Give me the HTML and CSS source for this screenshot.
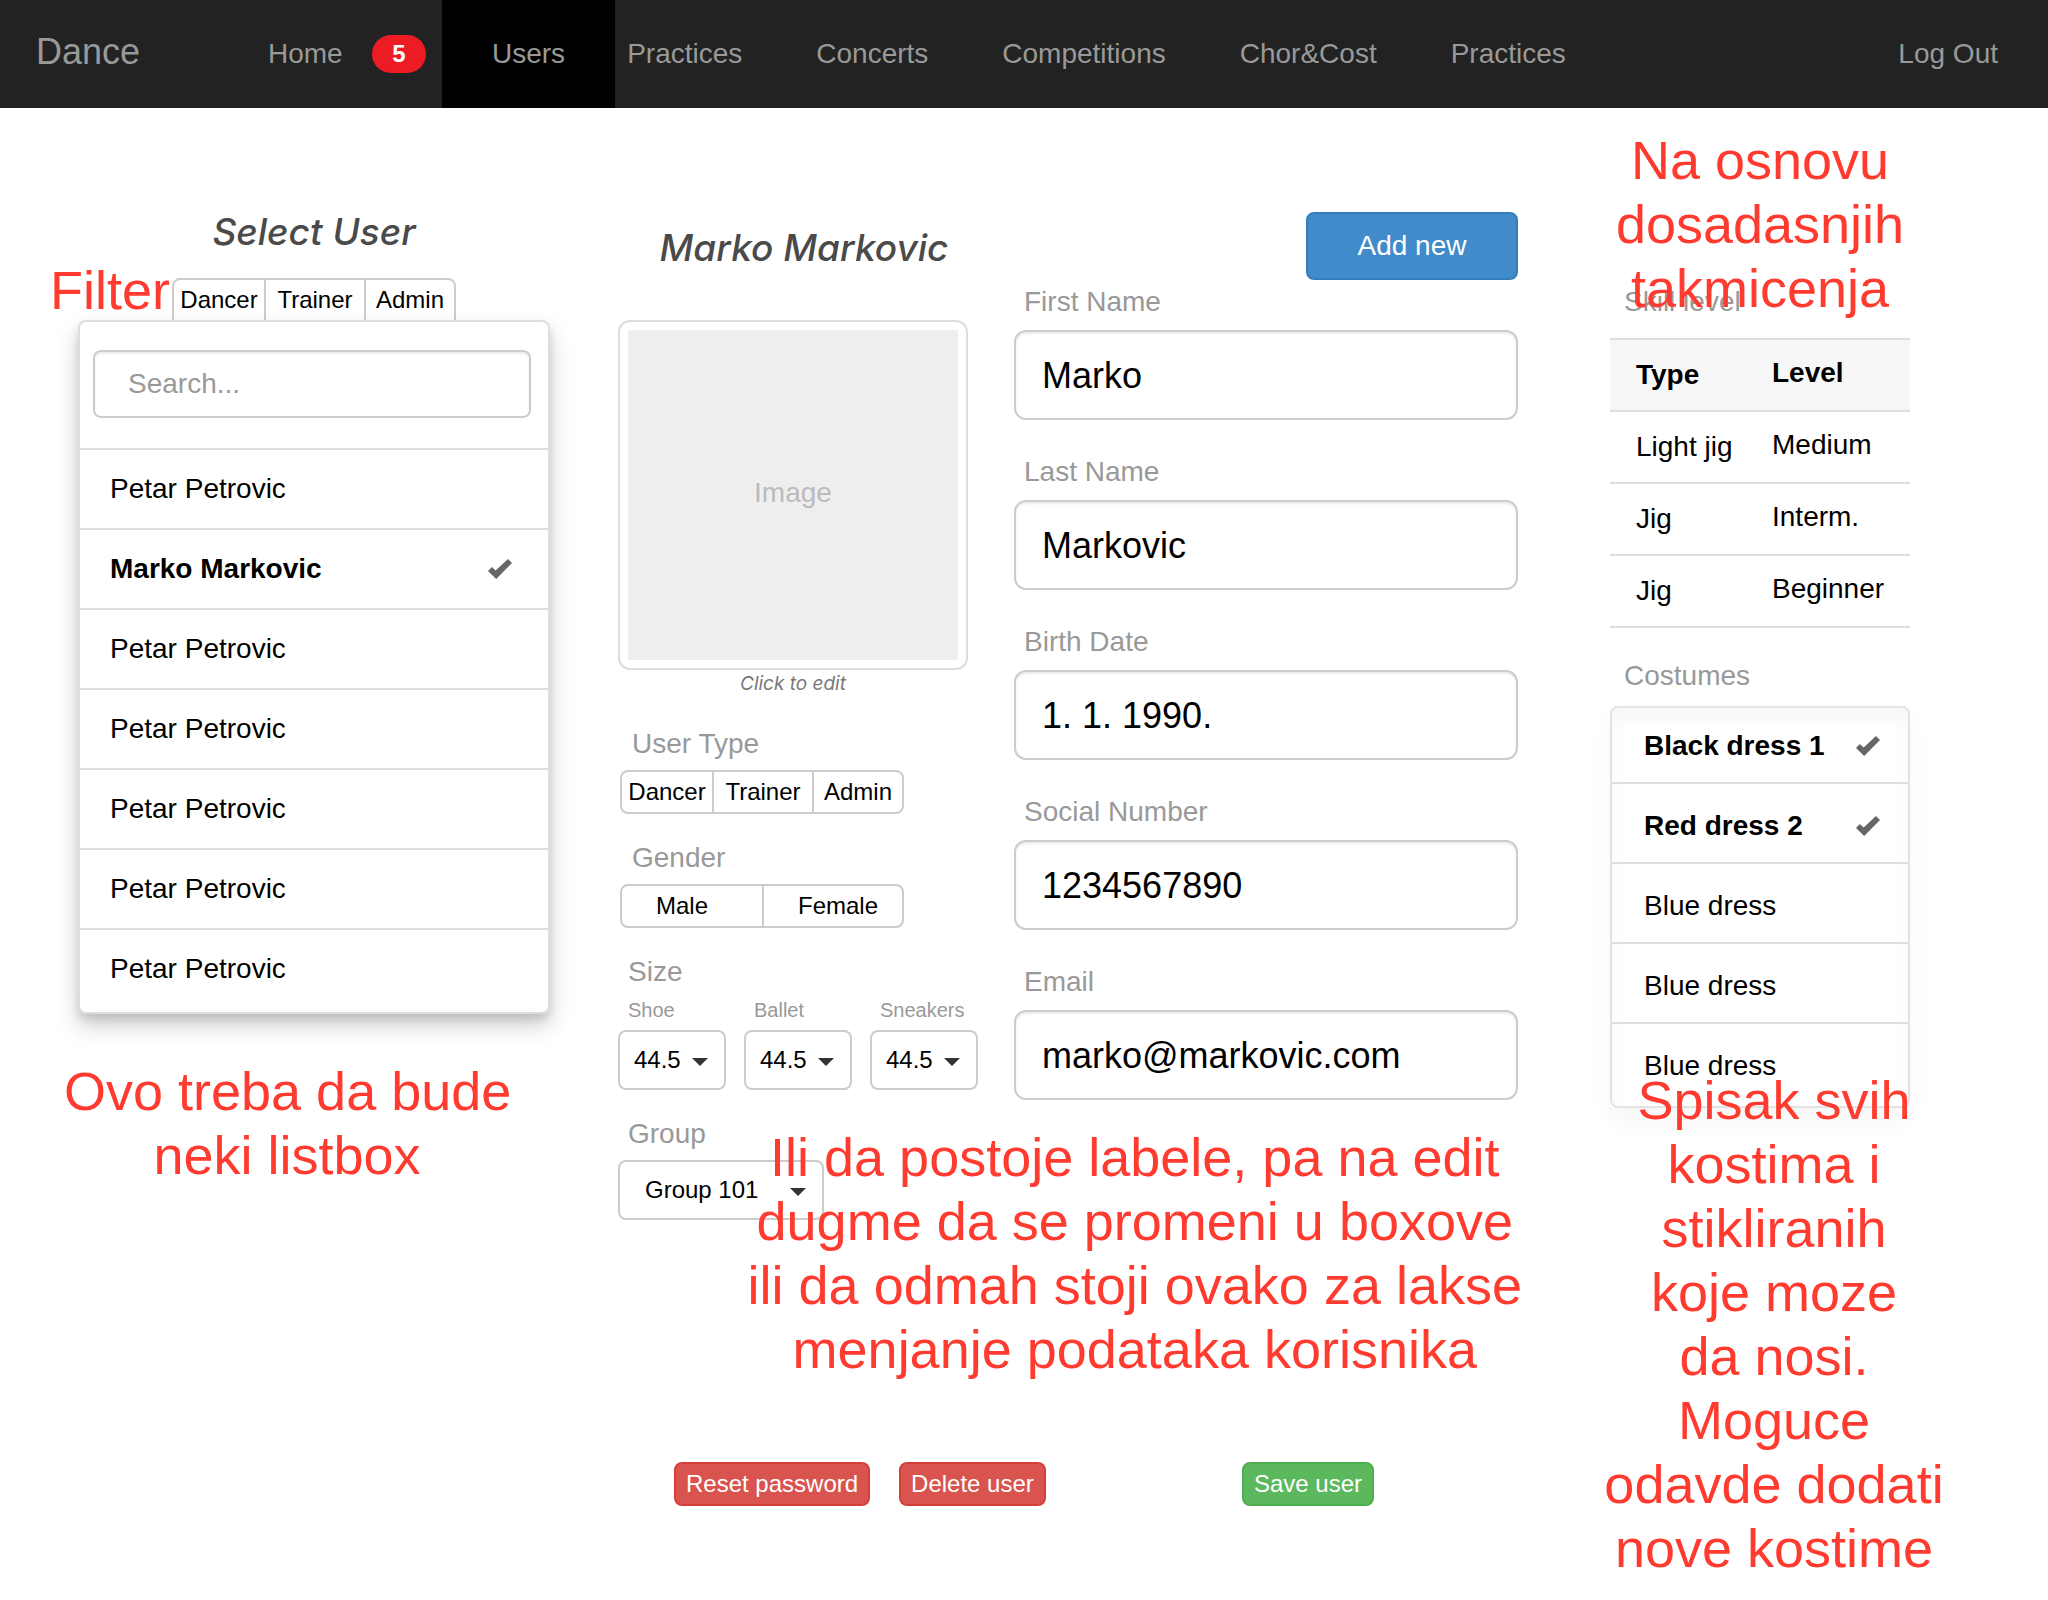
FILE: index.html
```html
<!DOCTYPE html>
<html lang="sr-Latn">
<head>
<meta charset="utf-8">
<meta name="viewport" content="width=device-width, initial-scale=1">
<title>Dance – Users</title>
<link rel="stylesheet" href="styles.css">
</head>
<body>
<header class="navbar">
  <a class="brand" href="#">Dance</a>
  <nav class="nav">
    <a class="nav-home" href="#">Home <span class="badge">5</span></a>
    <a class="nav-active" href="#" aria-current="page">Users</a>
    <div class="nav-rest">
      <a href="#">Practices</a>
      <a href="#">Concerts</a>
      <a href="#">Competitions</a>
      <a href="#">Chor&amp;Cost</a>
      <a href="#">Practices</a>
    </div>
  </nav>
  <a class="logout" href="#">Log Out</a>
</header>

<main class="page">
  <section class="users">
    <h2 class="title">Select User</h2>
    <div class="filter">
      <span class="note note-filter">Filter</span>
      <div class="segments segments-three" role="group" aria-label="Filter">
        <button type="button">Dancer</button>
        <button type="button">Trainer</button>
        <button type="button">Admin</button>
      </div>
    </div>
    <div class="panel">
      <div class="search-box">
        <input class="search" type="search" placeholder="Search..." aria-label="Search users">
      </div>
      <ul class="user-list">
        <li><button type="button">Petar Petrovic</button></li>
        <li><button type="button" class="selected">Marko Markovic <span class="check"></span></button></li>
        <li><button type="button">Petar Petrovic</button></li>
        <li><button type="button">Petar Petrovic</button></li>
        <li><button type="button">Petar Petrovic</button></li>
        <li><button type="button">Petar Petrovic</button></li>
        <li><button type="button">Petar Petrovic</button></li>
      </ul>
    </div>
    <p class="note note-list">Ovo treba da bude<br>neki listbox</p>
  </section>

  <form class="editor">
    <div class="editor-columns">
      <div class="profile">
        <h2 class="title">Marko Markovic</h2>
        <figure class="photo">
          <div class="photo-frame"><div class="photo-fill">Image</div></div>
          <figcaption>Click to edit</figcaption>
        </figure>

        <div class="group">
          <span class="label" id="type-label">User Type</span>
          <div class="segments segments-three" role="group" aria-labelledby="type-label">
            <button type="button">Dancer</button>
            <button type="button">Trainer</button>
            <button type="button">Admin</button>
          </div>
        </div>
        <div class="group">
          <span class="label" id="gender-label">Gender</span>
          <div class="segments segments-two" role="group" aria-labelledby="gender-label">
            <button type="button">Male</button>
            <button type="button">Female</button>
          </div>
        </div>
        <div class="group">
          <span class="label label-near">Size</span>
          <div class="sizes">
            <div class="size">
              <label for="shoe">Shoe</label>
              <div class="dropdown"><select id="shoe"><option>44.5</option></select></div>
            </div>
            <div class="size">
              <label for="ballet">Ballet</label>
              <div class="dropdown"><select id="ballet"><option>44.5</option></select></div>
            </div>
            <div class="size">
              <label for="sneakers">Sneakers</label>
              <div class="dropdown"><select id="sneakers"><option>44.5</option></select></div>
            </div>
          </div>
        </div>
        <div class="group">
          <label class="label label-near" for="group">Group</label>
          <div class="dropdown dropdown-wide"><select id="group"><option>Group 101</option></select></div>
        </div>
      </div>

      <div class="fields">
        <button type="button" class="button-primary">Add new</button>
        <div class="field">
          <label class="label label-near" for="first">First Name</label>
          <input id="first" type="text" value="Marko">
        </div>
        <div class="field">
          <label class="label label-near" for="last">Last Name</label>
          <input id="last" type="text" value="Markovic">
        </div>
        <div class="field">
          <label class="label label-near" for="birth">Birth Date</label>
          <input id="birth" type="text" value="1. 1. 1990.">
        </div>
        <div class="field">
          <label class="label label-near" for="social">Social Number</label>
          <input id="social" type="text" value="1234567890">
        </div>
        <div class="field">
          <label class="label label-near" for="email">Email</label>
          <input id="email" type="email" value="marko@markovic.com">
        </div>
      </div>
    </div>

    <p class="note note-editor">Ili da postoje labele, pa na edit<br>dugme da se promeni u boxove<br>ili da odmah stoji ovako za lakse<br>menjanje podataka korisnika</p>

    <div class="actions">
      <button type="button" class="button-small danger">Reset password</button>
      <button type="button" class="button-small danger">Delete user</button>
      <button type="submit" class="button-small success">Save user</button>
    </div>
  </form>

  <aside class="extras">
    <p class="note note-skill">Na osnovu<br>dosadasnjih<br>takmicenja</p>
    <span class="label" id="skill-label">Skill level</span>
    <table class="skills" aria-labelledby="skill-label">
      <thead>
        <tr><th scope="col">Type</th><th scope="col">Level</th></tr>
      </thead>
      <tbody>
        <tr><td>Light jig</td><td>Medium</td></tr>
        <tr><td>Jig</td><td>Interm.</td></tr>
        <tr><td>Jig</td><td>Beginner</td></tr>
      </tbody>
    </table>

    <span class="label" id="costumes-label">Costumes</span>
    <ul class="costumes" aria-labelledby="costumes-label">
      <li><label>Black dress 1 <input type="checkbox" class="check" checked></label></li>
      <li><label>Red dress 2 <input type="checkbox" class="check" checked></label></li>
      <li><label>Blue dress <input type="checkbox" class="check"></label></li>
      <li><label>Blue dress <input type="checkbox" class="check"></label></li>
      <li><label>Blue dress <input type="checkbox" class="check"></label></li>
    </ul>
    <p class="note note-costumes">Spisak svih<br>kostima i<br>stikliranih<br>koje moze<br>da nosi.<br>Moguce<br>odavde dodati<br>nove kostime</p>
  </aside>
</main>
</body>
</html>
```

FILE: styles.css
```css
* {
  box-sizing: border-box;
}

body {
  margin: 0;
  background: #fff;
  color: #000;
  font: 28px/32px "Liberation Sans", Arial, sans-serif;
}

button,
input,
select {
  margin: 0;
  color: inherit;
  font: inherit;
}

a {
  color: inherit;
  text-decoration: none;
}

ul {
  margin: 0;
  padding: 0;
  list-style: none;
}

/* Navigation bar */

.navbar {
  display: flex;
  padding: 0 50px 0 36px;
  background: #222;
  color: #999;
  line-height: 108px;
  white-space: nowrap;
}

.brand {
  width: 232px;
  font-size: 36px;
  line-height: 104px;
}

.nav {
  display: flex;
}

.nav-home {
  display: flex;
  align-items: center;
  justify-content: space-between;
  width: 174px;
  padding-right: 16px;
}

.badge {
  width: 54px;
  border-radius: 20px;
  background: #ed1c24;
  color: #fff;
  font-size: 24px;
  font-weight: 700;
  line-height: 38px;
  text-align: center;
}

.nav-active {
  padding: 0 50px;
  background: #000;
}

.nav-rest {
  display: flex;
  gap: 74px;
  padding-left: 12px;
}

.logout {
  margin-left: auto;
}

/* Page columns */

.page {
  display: grid;
  grid-template-columns: minmax(0, 540fr) minmax(0, 992fr) minmax(0, 300fr);
  padding: 100px 138px 20px 78px;
}

.title {
  margin: 0;
  color: #4a4a4a;
  font: italic 500 37px/48px Inter, sans-serif;
  text-align: center;
}

.label {
  display: block;
  padding-left: 14px;
  color: #999;
}

.label-near {
  padding-left: 10px;
}

/* Review notes laid over the mockup */

.note {
  margin: 0;
  color: #ff3b30;
  font-size: 54px;
  line-height: 64px;
  text-align: center;
  white-space: nowrap;
}

.note-filter {
  position: absolute;
  right: 100%;
  bottom: 0;
  padding-right: 2px;
}

.note-list {
  margin: 45px 40px 0 -14px;
}

.note-editor {
  position: absolute;
  top: 917px;
  right: 88px;
}

.note-skill {
  position: absolute;
  top: -80px;
  left: 0;
  right: 0;
}

.note-costumes {
  position: relative;
  margin: -40px -36px 0 -8px;
}

/* Segmented buttons */

.segments {
  display: grid;
  width: 284px;
  height: 44px;
  border: 2px solid #ccc;
  border-radius: 8px;
  background: #fff;
  font-size: 24px;
}

.segments-three {
  grid-template-columns: 90px 100px 1fr;
}

.segments-two {
  grid-template-columns: 1fr 1fr;
}

.group .segments {
  margin-left: 2px;
}

.segments button {
  padding: 0;
  border: 0;
  background: none;
}

.segments button + button {
  border-left: 2px solid #ccc;
}

.segments-two button {
  padding-left: 34px;
  text-align: left;
}

/* User list */

.users {
  padding-right: 68px;
}

.filter {
  position: relative;
  width: 284px;
  margin: 22px auto -2px;
}

.filter .segments {
  border-radius: 8px 8px 0 0;
}

.panel {
  position: relative;
  padding-bottom: 4px;
  border: 2px solid #ddd;
  border-radius: 8px;
  background: #fff;
  box-shadow: 0 12px 24px rgba(0, 0, 0, 0.18), 0 6px 8px rgba(0, 0, 0, 0.12);
}

.search-box {
  padding: 28px 17px 30px 13px;
}

.search {
  display: block;
  width: 100%;
  height: 68px;
  padding: 0 33px;
  border: 2px solid #ccc;
  border-radius: 8px;
  background: #fff;
  box-shadow: inset 0 2px 2px rgba(0, 0, 0, 0.08);
  appearance: none;
}

.search::placeholder {
  color: #999;
  opacity: 1;
}

.user-list button {
  display: flex;
  align-items: center;
  justify-content: space-between;
  width: 100%;
  height: 80px;
  padding: 0 36px 0 30px;
  border: 0;
  border-top: 2px solid #ddd;
  background: none;
  text-align: left;
}

.user-list .selected {
  font-weight: 700;
}

.check {
  flex: none;
  width: 24px;
  height: 20px;
  background: #666;
  clip-path: polygon(0 60%, 16% 40%, 32% 57%, 83% 0, 100% 20%, 34% 100%);
  appearance: none;
}

/* Editor */

.editor {
  position: relative;
  padding-right: 92px;
}

.editor-columns {
  display: grid;
  grid-template-columns: minmax(0, 372fr) minmax(0, 504fr);
  gap: 24px;
}

.profile .title {
  margin-top: 16px;
}

.photo {
  width: 350px;
  margin: 48px 0 32px;
}

.photo-frame {
  height: 350px;
  padding: 8px;
  border: 2px solid #ddd;
  border-radius: 12px;
}

.photo-fill {
  display: grid;
  place-items: center;
  height: 100%;
  padding-bottom: 4px;
  border-radius: 2px;
  background: #eee;
  color: #bbb;
}

.photo figcaption {
  margin-top: 2px;
  color: #777;
  font: italic 19px/24px Inter, sans-serif;
  text-align: center;
}

.group {
  display: grid;
  gap: 10px;
  margin-bottom: 28px;
}

.sizes {
  display: flex;
  gap: 18px;
}

.size label {
  display: block;
  margin-bottom: 8px;
  padding-left: 10px;
  color: #999;
  font-size: 20px;
  line-height: 24px;
}

.dropdown {
  position: relative;
  width: 108px;
}

.dropdown-wide {
  width: 206px;
}

.dropdown::after {
  content: "";
  position: absolute;
  top: 28px;
  right: 18px;
  border: 8px solid transparent;
  border-top-color: #333;
  border-bottom: 0;
  pointer-events: none;
}

.dropdown select {
  display: block;
  width: 100%;
  height: 60px;
  padding: 0 14px;
  border: 2px solid #ccc;
  border-radius: 8px;
  background: #fff;
  font-size: 24px;
  appearance: none;
}

.dropdown-wide select {
  padding: 0 25px;
}

.fields {
  display: grid;
  align-content: start;
  gap: 36px;
  padding-top: 4px;
}

.field {
  display: grid;
  gap: 12px;
}

.field input {
  width: 100%;
  height: 90px;
  padding: 2px 26px 0;
  border: 2px solid #ccc;
  border-radius: 12px;
  background: #fff;
  box-shadow: inset 0 2px 2px rgba(0, 0, 0, 0.08);
  font-size: 36px;
}

.button-primary {
  justify-self: end;
  width: 212px;
  height: 68px;
  margin-bottom: -30px;
  border: 2px solid #357ebd;
  border-radius: 8px;
  background: #428bca;
  color: #fff;
}

.actions {
  display: flex;
  gap: 29px;
  margin-top: 214px;
  padding: 0 144px 0 56px;
}

.button-small {
  height: 44px;
  padding: 0 10px;
  border: 2px solid;
  border-radius: 8px;
  color: #fff;
  font-size: 24px;
  line-height: 28px;
  white-space: nowrap;
}

.danger {
  border-color: #d43f3a;
  background: #d9534f;
}

.success {
  margin-left: auto;
  border-color: #4cae4c;
  background: #5cb85c;
}

/* Skills and costumes */

.extras {
  position: relative;
  padding-top: 78px;
}

.skills {
  width: 100%;
  margin: 20px 0 32px;
  border-collapse: collapse;
  table-layout: fixed;
  text-align: left;
}

.skills tr {
  height: 72px;
  border-top: 2px solid #ddd;
  border-bottom: 2px solid #ddd;
}

.skills th,
.skills td {
  padding: 0 0 4px;
  white-space: nowrap;
}

.skills th:first-child,
.skills td:first-child {
  width: 162px;
  padding: 0 0 0 26px;
}

.skills thead {
  background: #f7f7f7;
}

.costumes {
  margin-top: 14px;
  padding-bottom: 4px;
  border: 2px solid #e3e3e3;
  border-radius: 8px;
  box-shadow: 0 12px 24px rgba(0, 0, 0, 0.04), inset 0 12px 16px rgba(0, 0, 0, 0.03);
}

.costumes label {
  display: flex;
  align-items: center;
  justify-content: space-between;
  padding: 26px 28px 20px 32px;
}

.costumes li + li {
  border-top: 2px solid #ddd;
}

.costumes li:first-child label {
  padding-top: 22px;
}

.costumes label:has(:checked) {
  font-weight: 700;
}

.costumes .check:not(:checked) {
  background: none;
}
```
